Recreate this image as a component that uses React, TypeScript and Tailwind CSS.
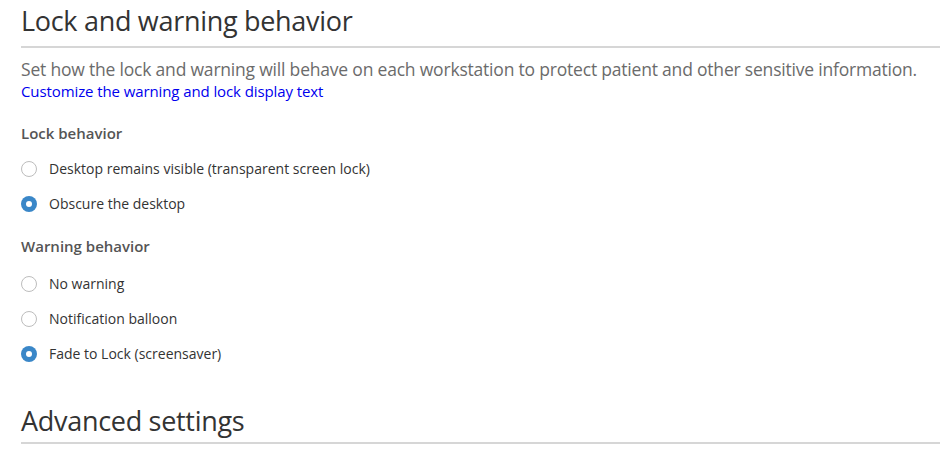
import React from 'react';

const font = { fontFamily: '"Open Sans", "Noto Sans", sans-serif' };

function Radio({ label, checked }: { label: string; checked?: boolean }) {
  return (
    <label className="flex items-center h-[35px] gap-[12px] cursor-pointer">
      {checked ? (
        <span className="w-4 h-4 rounded-full bg-[#3a87c8] flex items-center justify-center shrink-0">
          <span className="w-[6px] h-[6px] rounded-full bg-white" />
        </span>
      ) : (
        <span className="w-4 h-4 rounded-full border border-[#bdbdbd] bg-white shrink-0" />
      )}
      <span className="text-[14px] text-[#333333]">{label}</span>
    </label>
  );
}

export default function App() {
  return (
    <div className="w-[940px] h-[460px] bg-white overflow-hidden pl-[21px]" style={font}>
      {/* Lock and warning */}
      <h2 className="h-[48px] pt-[2px] text-[27px] tracking-[-0.3px] leading-[38px] text-[#333333] border-b-2 border-[#d6d6d6]">
        Lock and warning behavior
      </h2>
      <p className="mt-[9px] text-[17.5px] tracking-[-0.2px] leading-[24px] text-[#6b6b6b] whitespace-nowrap">
        Set how the lock and warning will behave on each workstation to protect patient and other sensitive information.
      </p>
      <a href="#" className="block text-[15px] tracking-[-0.1px] leading-[20px] text-[#0000ee]">
        Customize the warning and lock display text
      </a>

      <div className="mt-[22px] text-[15px] leading-[20px] font-semibold text-[#555555]">Lock behavior</div>
      <div className="mt-[8px] flex flex-col">
        <Radio label="Desktop remains visible (transparent screen lock)" />
        <Radio label="Obscure the desktop" checked />
      </div>

      <div className="mt-[15px] text-[15px] leading-[20px] font-semibold text-[#555555]">Warning behavior</div>
      <div className="mt-[10px] flex flex-col">
        <Radio label="No warning" />
        <Radio label="Notification balloon" />
        <Radio label="Fade to Lock (screensaver)" checked />
      </div>

      {/* Advanced */}
      <h2 className="mt-[31px] h-[42px] text-[27px] tracking-[-0.3px] leading-[38px] text-[#333333] border-b-2 border-[#d6d6d6]">
        Advanced settings
      </h2>
    </div>
  );
}
